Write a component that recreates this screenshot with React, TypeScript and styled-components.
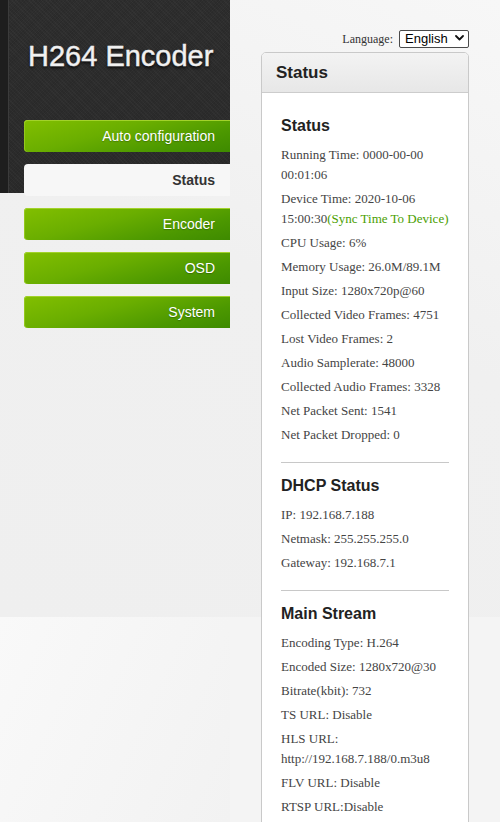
import React from "react";
import styled, { createGlobalStyle } from "styled-components";

const Global = createGlobalStyle`
  html, body { margin: 0; padding: 0; }
  body {
    background: #f4f4f4;
    font-family: "Liberation Sans", Arial, sans-serif;
  }
  * { box-sizing: border-box; }
`;

const Page = styled.div`
  display: flex;
  min-height: 822px;
  background:
    linear-gradient(205deg, #f7f7f7 0%, #f0f0f0 45%, #efefef 100%) 0 0 / 100% 617px no-repeat,
    #f4f4f4;
`;

const Sidebar = styled.aside`
  width: 230px;
  flex: none;
  background:
    linear-gradient(90deg, #1e1e1e 0 8px, #3b3b3b 8px 9px, transparent 9px) 0 0 / 100% 193px no-repeat,
    repeating-linear-gradient(45deg, rgba(255,255,255,0.025) 0 1px, transparent 1px 3px) 0 0 / 100% 193px no-repeat,
    repeating-linear-gradient(-45deg, rgba(0,0,0,0.08) 0 1px, transparent 1px 2px) 0 0 / 100% 193px no-repeat,
    linear-gradient(#2e2e2e, #2b2b2b) 0 0 / 100% 193px no-repeat,
    linear-gradient(115deg, #f9f9f9 0%, #f1f1f1 60%, #eeeeee 100%) 0 617px / 100% 100% no-repeat;
`;

const Title = styled.h1`
  margin: 0;
  padding: 40px 0 0 28px;
  height: 73px;
  font-family: "Liberation Sans", Arial, sans-serif;
  font-weight: normal;
  font-size: 29px;
  line-height: 32px;
  color: #f2f2f2;
  white-space: nowrap;
  -webkit-text-stroke: 0.4px #e8e8e8;
  text-shadow: 0 2px 3px rgba(0, 0, 0, 0.9), 0 0 1px rgba(255,255,255,0.4);
`;

const Nav = styled.nav`
  display: flex;
  flex-direction: column;
  gap: 12px;
  margin-top: 47px;
  padding-left: 24px;
`;

const NavButton = styled.div<{ $active?: boolean }>`
  height: 32px;
  border-radius: 4px 0 0 4px;
  padding-right: 15px;
  text-align: right;
  font-family: "Liberation Sans", Arial, sans-serif;
  font-size: 14px;
  line-height: 32px;
  cursor: pointer;
  ${(p) =>
    p.$active
      ? `
    background: #f7f7f7;
    color: #333;
    font-weight: bold;
  `
      : `
    background: linear-gradient(165deg, #82bf00 0%, #6aae00 40%, #4c9800 75%, #3e8a00 100%);
    box-shadow: inset 0 1px 0 #a2d22a, inset 1px 0 0 #94c81e;
    color: #ffffff;
    text-shadow: 0 1px 1px rgba(0, 0, 0, 0.25);
  `}
`;

const Main = styled.main`
  flex: 1;
  padding: 29px 31px 0 31px;
`;

const LangRow = styled.div`
  display: flex;
  justify-content: flex-end;
  align-items: center;
  gap: 6px;
  height: 18px;
`;

const LangLabel = styled.span`
  font-family: "Liberation Serif", "Times New Roman", serif;
  font-size: 12px;
  color: #333;
  padding-top: 2px;
`;

const SelectWrap = styled.div`
  position: relative;
  width: 70px;
  height: 18px;
`;

const Select = styled.select`
  appearance: none;
  -webkit-appearance: none;
  width: 100%;
  height: 100%;
  margin: 0;
  padding: 0 0 0 5px;
  border: 1px solid #4a4a4a;
  border-radius: 2px;
  background: #fff;
  font-family: "Liberation Sans", Arial, sans-serif;
  font-size: 13px;
  line-height: 16px;
  color: #000;
`;

const Chevron = styled.svg`
  position: absolute;
  right: 5px;
  top: 6px;
  width: 9px;
  height: 6px;
  pointer-events: none;
`;

const Panel = styled.section`
  margin-top: 5px;
  width: 208px;
  border: 1px solid #c9c9c9;
  border-radius: 5px 5px 0 0;
  background: #fff;
  overflow: hidden;
`;

const PanelHeader = styled.div`
  height: 40px;
  padding-left: 14px;
  border-bottom: 1px solid #cccccc;
  background: linear-gradient(#f3f3f3, #e7e7e7);
  font-family: "Liberation Sans", Arial, sans-serif;
  font-weight: bold;
  font-size: 17px;
  line-height: 40px;
  color: #222;
`;

const PanelBody = styled.div`
  padding: 23px 19px 10px 19px;
`;

const SectionTitle = styled.h3`
  margin: 0 0 9px 0;
  font-family: "Liberation Sans", Arial, sans-serif;
  font-weight: bold;
  font-size: 16px;
  line-height: 20px;
  color: #222;
`;

const Line = styled.p`
  margin: 0 0 4px 0;
  font-family: "Liberation Serif", "Times New Roman", serif;
  font-size: 13px;
  line-height: 20px;
  color: #444;
  word-break: break-word;
`;

const SyncLink = styled.a`
  color: #4a9e00;
  text-decoration: none;
  cursor: pointer;
`;

const Divider = styled.hr`
  margin: 17px 0 13px 0;
  border: 0;
  height: 1px;
  background: #c8c8c8;
`;

const navItems = [
  { label: "Auto configuration" },
  { label: "Status", active: true },
  { label: "Encoder" },
  { label: "OSD" },
  { label: "System" },
];

const statusLines = [
  "CPU Usage: 6%",
  "Memory Usage: 26.0M/89.1M",
  "Input Size: 1280x720p@60",
  "Collected Video Frames: 4751",
  "Lost Video Frames: 2",
  "Audio Samplerate: 48000",
  "Collected Audio Frames: 3328",
  "Net Packet Sent: 1541",
  "Net Packet Dropped: 0",
];

const dhcpLines = [
  "IP: 192.168.7.188",
  "Netmask: 255.255.255.0",
  "Gateway: 192.168.7.1",
];

const streamLines = [
  "Encoding Type: H.264",
  "Encoded Size: 1280x720@30",
  "Bitrate(kbit): 732",
  "TS URL: Disable",
  "HLS URL: http://192.168.7.188/0.m3u8",
  "FLV URL: Disable",
  "RTSP URL:Disable",
];

export default function App() {
  return (
    <>
      <Global />
      <Page>
        <Sidebar>
          <Title>H264 Encoder</Title>
          <Nav>
            {navItems.map((n) => (
              <NavButton key={n.label} $active={n.active}>
                {n.label}
              </NavButton>
            ))}
          </Nav>
        </Sidebar>
        <Main>
          <LangRow>
            <LangLabel>Language:</LangLabel>
            <SelectWrap>
              <Select defaultValue="en">
                <option value="en">English</option>
                <option value="zh">中文</option>
              </Select>
              <Chevron viewBox="0 0 9 6">
                <path d="M1 1 L4.5 4.5 L8 1" fill="none" stroke="#111" strokeWidth="1.8" strokeLinecap="round" strokeLinejoin="round" />
              </Chevron>
            </SelectWrap>
          </LangRow>
          <Panel>
            <PanelHeader>Status</PanelHeader>
            <PanelBody>
              <SectionTitle>Status</SectionTitle>
              <Line>Running Time: 0000-00-00 00:01:06</Line>
              <Line>
                Device Time: 2020-10-06 15:00:30
                <SyncLink>(Sync Time To Device)</SyncLink>
              </Line>
              {statusLines.map((l) => (
                <Line key={l}>{l}</Line>
              ))}
              <Divider />
              <SectionTitle>DHCP Status</SectionTitle>
              {dhcpLines.map((l) => (
                <Line key={l}>{l}</Line>
              ))}
              <Divider />
              <SectionTitle>Main Stream</SectionTitle>
              {streamLines.map((l) => (
                <Line key={l}>{l}</Line>
              ))}
            </PanelBody>
          </Panel>
        </Main>
      </Page>
    </>
  );
}
